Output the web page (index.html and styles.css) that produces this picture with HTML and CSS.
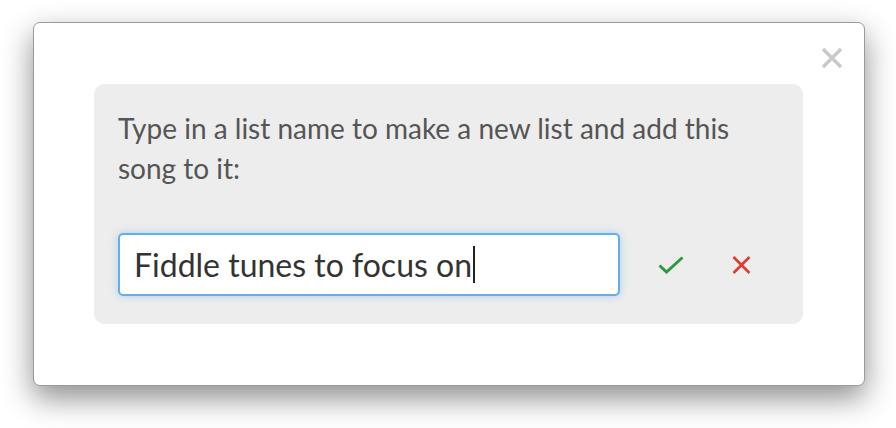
FILE: index.html
```html
<!DOCTYPE html>
<html>
<head>
<meta charset="utf-8">
<link rel="stylesheet" href="styles.css">
</head>
<body>
<div class="stage">
  <div class="modal">
    <button class="close" aria-label="Close">
      <svg width="22" height="22" viewBox="0 0 22 22"><path d="M2 2 L20 20 M20 2 L2 20" stroke="#c8c8c8" stroke-width="3.2" fill="none"/></svg>
    </button>
    <div class="panel">
      <p class="prompt">Type in a list name to make a new list and add this song to it:</p>
      <div class="row">
        <div class="field"><span class="value">Fiddle tunes to focus on</span><span class="caret"></span></div>
        <button class="icon-btn ok" aria-label="Save">
          <svg width="26" height="18" viewBox="0 0 26 18"><path d="M1.5 9.5 L8.5 16 L24.5 1.5" stroke="#2a9a3c" stroke-width="3" fill="none"/></svg>
        </button>
        <button class="icon-btn cancel" aria-label="Cancel">
          <svg width="19" height="18" viewBox="0 0 19 18"><path d="M1.5 1 L17.5 17 M17.5 1 L1.5 17" stroke="#e23a2f" stroke-width="2.6" fill="none"/></svg>
        </button>
      </div>
    </div>
  </div>
</div>
</body>
</html>
```
FILE: styles.css
```css
html, body {
  margin: 0;
  padding: 0;
  background: #ffffff;
  width: 896px;
  height: 428px;
  overflow: hidden;
}
.stage {
  padding: 22px 32px 0 33px;
}
.modal {
  position: relative;
  width: 832px;
  height: 364px;
  background: #fff;
  border: 1px solid #9a9a9a;
  border-radius: 7px;
  box-shadow: 0 12px 30px rgba(0, 0, 0, 0.45);
  padding: 61px 60px 0 60px;
  box-sizing: border-box;
  font-family: Lato, "Open Sans", sans-serif;
}
.close {
  position: absolute;
  top: 24px;
  right: 21px;
  background: none;
  border: 0;
  padding: 0;
  width: 22px;
  height: 22px;
  display: block;
}
.close svg { display: block; }
.panel {
  width: 709px;
  height: 240px;
  background: #ededed;
  border-radius: 10px;
  box-sizing: border-box;
  padding: 24px 24px 0 24px;
}
.prompt {
  margin: 0;
  font-size: 28px;
  line-height: 40px;
  color: #555555;
  width: 640px;
}
.row {
  display: flex;
  align-items: center;
  margin-top: 45px;
}
.field {
  width: 502px;
  height: 63px;
  box-sizing: border-box;
  background: #fff;
  border: 2px solid #64aeea;
  border-radius: 5px;
  box-shadow: 0 0 8px rgba(100, 170, 235, 0.45);
  display: flex;
  align-items: center;
  padding-left: 14px;
  font-size: 32px;
  color: #333;
}
.caret {
  display: inline-block;
  width: 2px;
  height: 37px;
  background: #222;
  margin-left: 1px;
}
.icon-btn {
  background: none;
  border: 0;
  padding: 0;
  display: block;
}
.icon-btn svg { display: block; }
.ok { margin-left: 38px; margin-top: 1px; }
.cancel { margin-left: 48px; margin-top: 1px; }
```
